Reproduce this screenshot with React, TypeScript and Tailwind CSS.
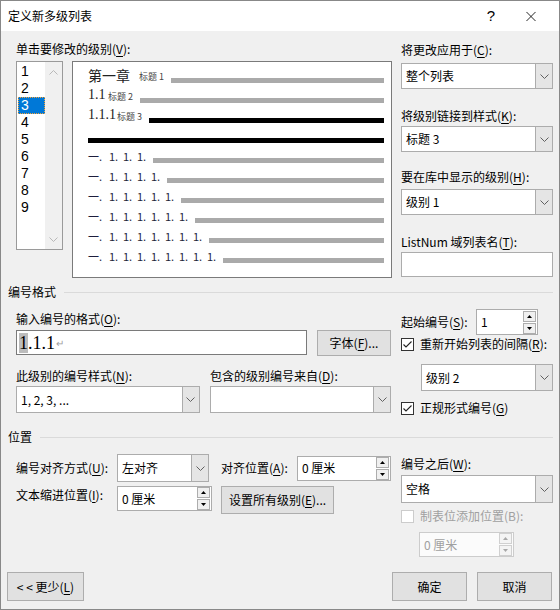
import React from "react";

// Label with an underlined access key, e.g. 单击要修改的级别(V):
function Lbl({
  text,
  k,
  tail = ":",
  className = "",
}: {
  text: string;
  k?: string;
  tail?: string;
  className?: string;
}) {
  return (
    <div className={`h-[16px] whitespace-nowrap text-[12px] leading-[16px] ${className}`}>
      {text}
      {k && (
        <>
          (<span className="underline underline-offset-2">{k}</span>)
        </>
      )}
      {tail}
    </div>
  );
}

const Chevron = () => (
  <svg width="9" height="5" viewBox="0 0 9 5">
    <path d="M0.5 0.5L4.5 4.5L8.5 0.5" fill="none" stroke="#606060" />
  </svg>
);

function Combo({ value, className = "" }: { value?: string; className?: string }) {
  return (
    <div className={`flex border border-[#acacac] bg-white ${className}`}>
      <div className="flex flex-1 items-center pl-[4px] text-[12px]">{value}</div>
      <div className="flex w-[17px] items-center justify-center border-l border-[#acacac] bg-[#e5e5e5]">
        <Chevron />
      </div>
    </div>
  );
}

function SpinBtns({ disabled = false }: { disabled?: boolean }) {
  const fill = disabled ? "#a8a8a8" : "#000";
  const btn = `flex h-[11px] w-[13px] items-center justify-center border ${
    disabled ? "border-[#d0d0d0] bg-[#f4f4f4]" : "border-[#adadad] bg-[#f0f0f0]"
  }`;
  return (
    <div className="flex flex-col justify-center gap-px pr-px">
      <div className={btn}>
        <svg width="5" height="3" viewBox="0 0 5 3">
          <path d="M2.5 0L5 3H0z" fill={fill} />
        </svg>
      </div>
      <div className={btn}>
        <svg width="5" height="3" viewBox="0 0 5 3">
          <path d="M0 0H5L2.5 3z" fill={fill} />
        </svg>
      </div>
    </div>
  );
}

function Spin({
  value,
  className = "",
  disabled = false,
}: {
  value: string;
  className?: string;
  disabled?: boolean;
}) {
  return (
    <div
      className={`flex border ${
        disabled ? "border-[#cccccc] bg-[#fbfbfb] text-[#a0a0a0]" : "border-[#acacac] bg-white"
      } ${className}`}
    >
      <div className="flex flex-1 items-center pl-[4px] text-[12px]">{value}</div>
      <SpinBtns disabled={disabled} />
    </div>
  );
}

function Check({ checked = true, disabled = false }: { checked?: boolean; disabled?: boolean }) {
  return (
    <div
      className={`flex h-[13px] w-[13px] shrink-0 items-center justify-center border bg-white ${
        disabled ? "border-[#cccccc]" : "border-[#333333]"
      }`}
    >
      {checked && (
        <svg width="11" height="11" viewBox="0 0 11 11">
          <path d="M1.5 5.5L4 8L9.5 2.5" fill="none" stroke="#222" strokeWidth="1.1" />
        </svg>
      )}
    </div>
  );
}

function Btn({ children, className = "" }: { children: React.ReactNode; className?: string }) {
  return (
    <div
      className={`flex items-center justify-center border border-[#adadad] bg-[#e1e1e1] text-[12px] ${className}`}
    >
      {children}
    </div>
  );
}

function Group({ title, lineGap }: { title: string; lineGap: string }) {
  return (
    <div className="flex h-[16px] items-center">
      <span className="text-[12px] leading-[16px]">{title}</span>
      <div className={`h-px flex-1 bg-[#dadada] ${lineGap}`} />
    </div>
  );
}

// preview rows for levels 5..10: 一. followed by n times "1."
const deepRows = [3, 4, 5, 6, 7, 8];

export default function App() {
  return (
    <div className="flex h-[610px] w-[560px] flex-col border border-[#888888] bg-[#f0f0f0] font-['Noto_Sans_CJK_SC',sans-serif] text-black">
      {/* title bar */}
      <div className="flex h-[30px] shrink-0 items-center bg-white pl-[7px]">
        <span className="text-[12px]">定义新多级列表</span>
        <span className="ml-auto mr-[31px] text-[15px] font-['Liberation_Sans',sans-serif]">?</span>
        <div className="mr-[23px] flex h-[10px] w-[10px]">
          <svg width="11" height="11" viewBox="0 0 11 11">
            <path d="M0.5 0.5L10.5 10.5M10.5 0.5L0.5 10.5" stroke="#111" strokeWidth="1" />
          </svg>
        </div>
      </div>

      <div className="flex flex-1 flex-col pl-[7px] pr-[6px]">
        {/* level picker + preview */}
        <div className="flex gap-[9px] pl-[8px]">
          <div className="flex w-[376px] flex-col">
            <Lbl text="单击要修改的级别" k="V" className="mt-[10px]" />
            <div className="mt-[4px] flex gap-[9px]">
              <div className="flex h-[189px] w-[47px] border border-[#9a9a9a] bg-white">
                <div className="flex w-[28px] flex-col pl-px pt-px font-['Liberation_Sans',sans-serif]">
                  {[1, 2, 3, 4, 5, 6, 7, 8, 9].map((n) =>
                    n === 3 ? (
                      <div
                        key={n}
                        className="flex h-[17px] items-center border border-dotted border-[#f2a33a] bg-[#0078d7] pl-[2px] text-[14px] leading-[15px] text-white"
                      >
                        {n}
                      </div>
                    ) : (
                      <div key={n} className="flex h-[17px] items-center pl-[3px] text-[14px] leading-[15px]">
                        {n}
                      </div>
                    )
                  )}
                </div>
                <div className="flex flex-1 flex-col items-center justify-between bg-[#f0f0f0] pb-[7px] pt-[8px]">
                  <svg width="9" height="5" viewBox="0 0 9 5">
                    <path d="M0.5 4.5L4.5 0.5L8.5 4.5" fill="none" stroke="#b8b8b8" />
                  </svg>
                  <svg width="9" height="5" viewBox="0 0 9 5">
                    <path d="M0.5 0.5L4.5 4.5L8.5 0.5" fill="none" stroke="#b8b8b8" />
                  </svg>
                </div>
              </div>

              <div className="flex h-[217px] w-[320px] flex-col border border-[#7a7a7a] bg-white pl-[15px] pr-[7px] pt-[2px]">
                <div className="flex h-[20px] items-end">
                  <span className="w-[51px] text-[14px] leading-[18px] text-[#222]">第一章</span>
                  <span className="w-[32px] text-[9px] leading-[14px] text-[#444]">标题 1</span>
                  <div className="mb-px h-[5px] flex-1 bg-[#aaaaaa]" />
                </div>
                <div className="flex h-[20px] items-end">
                  <span className="w-[20px] font-['Liberation_Serif',serif] text-[14px] leading-[18px] text-[#222]">1.1</span>
                  <span className="w-[32px] text-[9px] leading-[14px] text-[#444]">标题 2</span>
                  <div className="mb-px h-[5px] flex-1 bg-[#aaaaaa]" />
                </div>
                <div className="flex h-[20px] items-end">
                  <span className="w-[29px] font-['Liberation_Serif',serif] text-[14px] leading-[18px] text-[#222]">1.1.1</span>
                  <span className="w-[32px] text-[9px] leading-[14px] text-[#444]">标题 3</span>
                  <div className="mb-px h-[5px] flex-1 bg-black" />
                </div>
                <div className="flex h-[20px] items-end">
                  <div className="mb-px h-[5px] flex-1 bg-black" />
                </div>
                {deepRows.map((n) => (
                  <div key={n} className="flex h-[20px] items-end">
                    <span className="flex text-[11px] leading-[16px] text-[#1e1e3c]">
                      <span className="w-[21px]">一.</span>
                      {Array.from({ length: n }).map((_, i) => (
                        <span key={i} className="w-[14px]">
                          1.
                        </span>
                      ))}
                    </span>
                    <div className="mb-px ml-[2px] h-[5px] flex-1 bg-[#aaaaaa]" />
                  </div>
                ))}
              </div>
            </div>
          </div>

          <div className="flex w-[152px] flex-col">
            <Lbl text="将更改应用于" k="C" className="mt-[11px]" />
            <Combo value="整个列表" className="mt-[5px] h-[26px]" />
            <Lbl text="将级别链接到样式" k="K" className="mt-[19px]" />
            <Combo value="标题 3" className="mt-[2px] h-[26px]" />
            <Lbl text="要在库中显示的级别" k="H" className="mt-[17px]" />
            <Combo value="级别 1" className="mt-[4px] h-[26px]" />
            <Lbl text="ListNum 域列表名" k="T" className="mt-[19px]" />
            <div className="mt-[2px] h-[25px] border border-[#acacac] bg-white" />
          </div>
        </div>

        {/* 编号格式 */}
        <div className="mt-[6px]">
          <Group title="编号格式" lineGap="ml-[8px]" />
        </div>
        <div className="flex gap-[10px] pl-[8px]">
          <div className="flex w-[375px] flex-col">
            <Lbl text="输入编号的格式" k="O" className="mt-[11px]" />
            <div className="mt-[3px] flex items-start gap-[10px]">
              <div className="flex h-[25px] w-[291px] items-center border border-[#7a7a7a] bg-white pl-[2px]">
                <span className="font-['Liberation_Serif',serif] text-[18px] leading-[20px]">
                  <span className="bg-[#bcbcbc]">1</span>.1.1
                </span>
                <span className="ml-px text-[10px] text-[#a0a0a0]">↵</span>
              </div>
              <Btn className="h-[26px] w-[74px]">
                字体(<span className="underline underline-offset-2">F</span>)...
              </Btn>
            </div>
            <div className="mt-[12px] flex gap-[10px]">
              <Lbl text="此级别的编号样式" k="N" className="w-[184px]" />
              <Lbl text="包含的级别编号来自" k="D" />
            </div>
            <div className="mt-[2px] flex gap-[10px]">
              <Combo value="1, 2, 3, ..." className="h-[27px] w-[184px]" />
              <Combo className="h-[27px] w-[182px]" />
            </div>
          </div>

          <div className="flex w-[152px] flex-col">
            <div className="mt-[9px] flex h-[26px] items-center">
              <Lbl text="起始编号" k="S" className="w-[75px]" />
              <Spin value="1" className="h-[26px] w-[62px]" />
            </div>
            <div className="mt-[2px] flex h-[14px] items-center gap-[6px]">
              <Check />
              <Lbl text="重新开始列表的间隔" k="R" />
            </div>
            <Combo value="级别 2" className="ml-[20px] mt-[13px] h-[27px] w-[132px]" />
            <div className="mt-[10px] flex h-[14px] items-center gap-[6px]">
              <Check />
              <Lbl text="正规形式编号" k="G" tail="" />
            </div>
          </div>
        </div>

        {/* 位置 */}
        <div className="mt-[14px]">
          <Group title="位置" lineGap="ml-[8px]" />
        </div>
        <div className="flex gap-[10px] pl-[8px]">
          <div className="flex w-[375px] flex-col">
            <div className="mt-[9px] flex h-[28px] items-center">
              <Lbl text="编号对齐方式" k="U" className="w-[101px]" />
              <Combo value="左对齐" className="h-[28px] w-[92px]" />
              <Lbl text="对齐位置" k="A" className="ml-[12px] w-[76px]" />
              <Spin value="0 厘米" className="h-[25px] w-[94px]" />
            </div>
            <div className="mt-[4px] flex items-start">
              <Lbl text="文本缩进位置" k="I" className="mt-[1px] w-[101px]" />
              <Spin value="0 厘米" className="h-[25px] w-[95px]" />
              <Btn className="ml-[9px] h-[28px] w-[113px]">
                设置所有级别(<span className="underline underline-offset-2">E</span>)...
              </Btn>
            </div>
          </div>

          <div className="flex w-[152px] flex-col">
            <Lbl text="编号之后" k="W" className="mt-[11px]" />
            <Combo value="空格" className="mt-[3px] h-[28px]" />
            <div className="mt-[6px] flex h-[14px] items-center gap-[6px]">
              <Check checked={false} disabled />
              <Lbl text="制表位添加位置(B)" className="text-[#a0a0a0]" />
            </div>
            <Spin value="0 厘米" disabled className="ml-[18px] mt-[9px] h-[25px] w-[95px]" />
          </div>
        </div>

        {/* footer */}
        <div className="-ml-px mr-px mt-[15px] flex items-center justify-between">
          <Btn className="h-[29px] w-[77px]">
            &lt; &lt; 更少(<span className="underline underline-offset-2">L</span>)
          </Btn>
          <div className="flex gap-[10px]">
            <Btn className="h-[29px] w-[75px]">确定</Btn>
            <Btn className="h-[29px] w-[75px]">取消</Btn>
          </div>
        </div>
      </div>
    </div>
  );
}
